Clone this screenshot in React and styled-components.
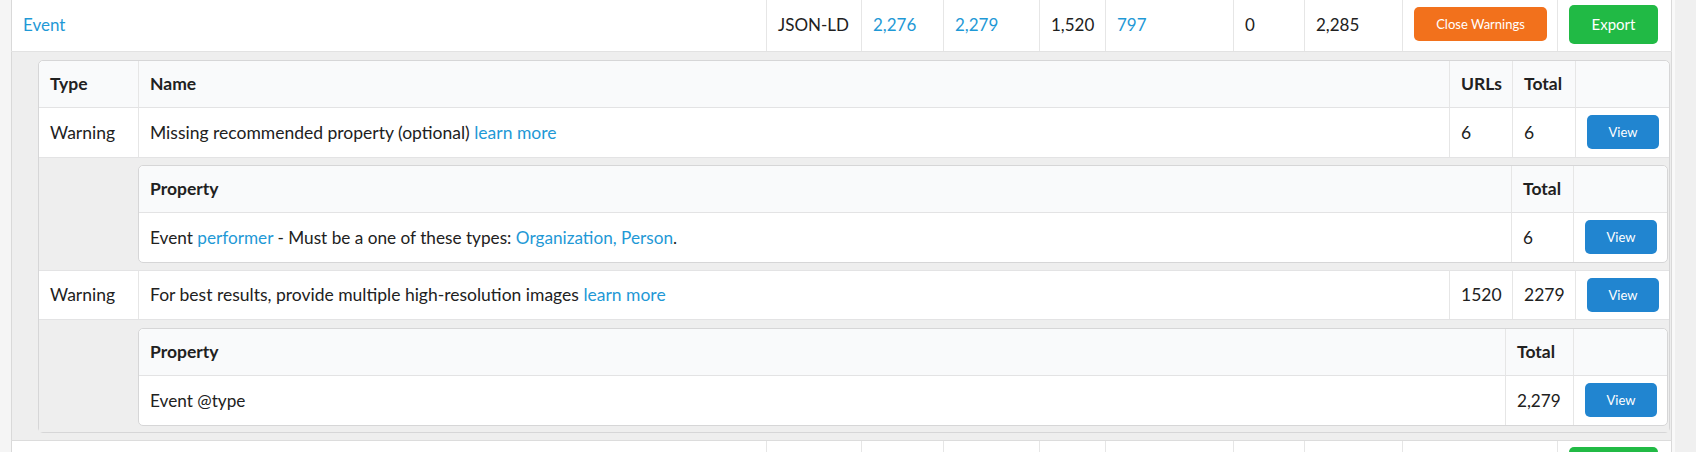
import React from "react";
import styled, { createGlobalStyle } from "styled-components";

const GlobalStyle = createGlobalStyle`
  *, *::before, *::after {
    box-sizing: border-box;
  }
  html, body {
    margin: 0;
    padding: 0;
    background: #f5f5f5;
  }
  body {
    font-family: Lato, "Noto Sans", sans-serif;
    color: #212121;
  }
`;

const Page = styled.div`
  display: flex;
  height: 452px;
  overflow: hidden;
`;

const Main = styled.div`
  flex: 1;
  padding-left: 11px;
  margin-top: -2px;
`;

const Track = styled.div`
  width: 24px;
  background: #f0f0f0;
  border-left: 3px solid #f9f9f9;
`;

const Grid = styled.table`
  width: 100%;
  table-layout: fixed;
  border-collapse: collapse;
  background: #fff;
  border-left: 1px solid #d9d9d9;
  border-right: 1px solid #d9d9d9;
  font-size: 17px;
`;

const Col = styled.col`
  width: ${(p) => (p.$w ? `${p.$w}px` : "auto")};
`;

const MainCell = styled.td`
  height: 53px;
  padding: 0 11px;
  vertical-align: middle;
  white-space: nowrap;
  border-bottom: 1px solid #e2e2e2;
  & + & {
    border-left: 1px solid #e6e6e6;
  }
`;

const ExpandCell = styled.td`
  padding: 8px 1px 7px 26px;
  background: #eeeeee;
  border-bottom: 1px solid #dcdcdc;
`;

const A = styled.a`
  color: #1f99d6;
  text-decoration: none;
`;

const tones = {
  orange: "#f2711c",
  green: "#21ba45",
  blue: "#2185d0",
};

const Button = styled.button`
  display: inline-flex;
  align-items: center;
  justify-content: center;
  width: ${(p) => p.$w}px;
  height: ${(p) => p.$h}px;
  padding: 0;
  border: 0;
  border-radius: 5px;
  background: ${(p) => tones[p.$tone]};
  color: #fff;
  font-family: Lato, "Noto Sans", sans-serif;
  font-size: ${(p) => p.$fs}px;
  cursor: pointer;
`;

const Panel = styled.table`
  width: 100%;
  table-layout: fixed;
  border-collapse: separate;
  border-spacing: 0;
  background: #fff;
  border: 1px solid #d6d6d7;
  border-radius: 5px;
  font-size: ${(p) => p.$fs || 17.5}px;
`;

const HeadCell = styled.th`
  height: 47px;
  padding: 0 11px;
  text-align: left;
  font-weight: 700;
  font-size: 17.5px;
  background: #f9fafb;
  border-bottom: 1px solid #e3e3e4;
  white-space: nowrap;
  & + & {
    border-left: 1px solid #e6e6e6;
  }
  &:first-child {
    border-top-left-radius: 5px;
  }
  &:last-child {
    border-top-right-radius: 5px;
  }
`;

const Cell = styled.td`
  height: 49px;
  padding: 0 11px;
  vertical-align: middle;
  white-space: nowrap;
  tr + tr > & {
    border-top: 1px solid #e3e3e4;
  }
  & + & {
    border-left: 1px solid #e6e6e6;
  }
`;

const Gutter = styled.td`
  background: #eeeeee;
  tr + tr > & {
    border-top: 1px solid #e3e3e4;
  }
`;

const NestCell = styled.td`
  padding: ${(p) => p.$pad};
  background: #eeeeee;
  tr + tr > & {
    border-top: 1px solid #e3e3e4;
  }
`;

const topCols = [755, 95, 82, 96, 66, 128, 71, 98, 155, null];

const warnings = [
  {
    name: "Missing recommended property (optional)",
    urls: "6",
    total: "6",
    totalWidth: 62,
    pad: "7px 1px 7px 0",
    property: (
      <>
        Event <A href="#">performer</A> - Must be a one of these types:{" "}
        <A href="#">Organization, Person</A>.
      </>
    ),
    propertyTotal: "6",
  },
  {
    name: "For best results, provide multiple high-resolution images",
    urls: "1520",
    total: "2279",
    totalWidth: 68,
    pad: "8px 1px 6px 0",
    property: "Event @type",
    propertyTotal: "2,279",
  },
];

const ViewButton = () => (
  <Button $tone="blue" $w={72} $h={34} $fs={13}>
    View
  </Button>
);

const PropertyTable = ({ item }) => (
  <Panel $fs={17.2}>
    <colgroup>
      <Col />
      <Col $w={item.totalWidth} />
      <Col $w={94} />
    </colgroup>
    <thead>
      <tr>
        <HeadCell>Property</HeadCell>
        <HeadCell>Total</HeadCell>
        <HeadCell />
      </tr>
    </thead>
    <tbody>
      <tr>
        <Cell>{item.property}</Cell>
        <Cell>{item.propertyTotal}</Cell>
        <Cell>
          <ViewButton />
        </Cell>
      </tr>
    </tbody>
  </Panel>
);

const WarningsTable = () => (
  <Panel>
    <colgroup>
      <Col $w={99} />
      <Col />
      <Col $w={63} />
      <Col $w={63} />
      <Col $w={94} />
    </colgroup>
    <thead>
      <tr>
        <HeadCell>Type</HeadCell>
        <HeadCell>Name</HeadCell>
        <HeadCell>URLs</HeadCell>
        <HeadCell>Total</HeadCell>
        <HeadCell />
      </tr>
    </thead>
    <tbody>
      {warnings.map((item) => (
        <React.Fragment key={item.name}>
          <tr>
            <Cell>Warning</Cell>
            <Cell>
              {item.name} <A href="#">learn more</A>
            </Cell>
            <Cell>{item.urls}</Cell>
            <Cell>{item.total}</Cell>
            <Cell>
              <ViewButton />
            </Cell>
          </tr>
          <tr>
            <Gutter />
            <NestCell colSpan={4} $pad={item.pad}>
              <PropertyTable item={item} />
            </NestCell>
          </tr>
        </React.Fragment>
      ))}
    </tbody>
  </Panel>
);

const App = () => (
  <>
    <GlobalStyle />
    <Page>
      <Main>
        <Grid>
          <colgroup>
            {topCols.map((w, i) => (
              <Col key={i} $w={w} />
            ))}
          </colgroup>
          <tbody>
            <tr>
              <MainCell>
                <A href="#">Event</A>
              </MainCell>
              <MainCell>JSON-LD</MainCell>
              <MainCell>
                <A href="#">2,276</A>
              </MainCell>
              <MainCell>
                <A href="#">2,279</A>
              </MainCell>
              <MainCell>1,520</MainCell>
              <MainCell>
                <A href="#">797</A>
              </MainCell>
              <MainCell>0</MainCell>
              <MainCell>2,285</MainCell>
              <MainCell>
                <Button $tone="orange" $w={133} $h={34} $fs={13}>
                  Close Warnings
                </Button>
              </MainCell>
              <MainCell>
                <Button $tone="green" $w={89} $h={39} $fs={15}>
                  Export
                </Button>
              </MainCell>
            </tr>
            <tr>
              <ExpandCell colSpan={10}>
                <WarningsTable />
              </ExpandCell>
            </tr>
            <tr>
              {topCols.slice(0, 9).map((w, i) => (
                <MainCell key={i} />
              ))}
              <MainCell>
                <Button $tone="green" $w={89} $h={39} $fs={15}>
                  Export
                </Button>
              </MainCell>
            </tr>
          </tbody>
        </Grid>
      </Main>
      <Track />
    </Page>
  </>
);

export default App;
